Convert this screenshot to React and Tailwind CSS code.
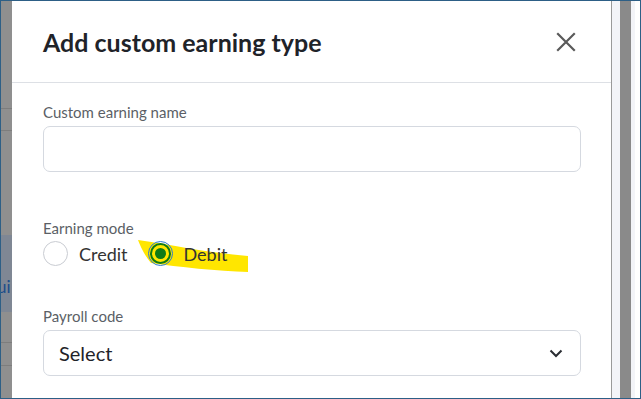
import React from 'react';

function Radio({ label, checked }) {
    return (
        <label className="flex items-center gap-[11px]">
            {checked ? (
                <span className="relative w-[25px] h-[25px] rounded-full border border-[#2b7bd0] flex items-center justify-center">
                    <span className="w-[21px] h-[21px] rounded-full border-[2px] border-[#0f7a16] flex items-center justify-center">
                        <span className="w-[11px] h-[11px] rounded-full bg-[#0f7a16]" />
                    </span>
                </span>
            ) : (
                <span className="w-[25px] h-[25px] rounded-full border border-[#c9ccd2] bg-white" />
            )}
            <span className="text-[18px] text-[#333] leading-none">{label}</span>
        </label>
    );
}

export default function App() {
    return (
        <div
            className="w-[641px] h-[399px] border border-[#2d5f86] flex overflow-hidden bg-white"
            style={{ fontFamily: 'Lato, "Open Sans", sans-serif' }}
        >
            {/* Left backdrop strip */}
            <div className="w-[11px] bg-[#8f8f8f] flex flex-col shrink-0">
                <div className="h-[107px]" />
                <div className="h-px bg-[#7d7d7d]" />
                <div className="h-[21px]" />
                <div className="h-px bg-[#7d7d7d]" />
                <div className="h-[104px]" />
                <div className="h-[77px] bg-[#7f8794] flex items-center overflow-hidden">
                    <span className="text-[17px] text-[#1d4d8a] -ml-[4px] mt-[26px]">ui</span>
                </div>
                <div className="h-[30px]" />
                <div className="h-px bg-[#7d7d7d]" />
                <div className="h-[22px]" />
                <div className="h-px bg-[#7d7d7d]" />
            </div>

            {/* Modal */}
            <div className="w-[599px] bg-white rounded-tl-[14px] flex flex-col shrink-0">
                <div className="h-[82px] flex items-center justify-between pl-[31px] pr-[35px] border-b border-[#dde0e5]">
                    <h1 className="text-[25px] font-bold text-[#1f2329] pt-[2px]">Add custom earning type</h1>
                    <svg width="20" height="20" viewBox="0 0 20 20" className="text-[#5a5a5a]">
                        <path d="M2 2 L18 18 M18 2 L2 18" stroke="currentColor" strokeWidth="2.2" strokeLinecap="square" />
                    </svg>
                </div>

                <div className="pl-[31px] pr-[30px] flex flex-col">
                    <div className="mt-[19px] text-[15px] leading-[20px] text-[#5b5f66]">Custom earning name</div>
                    <div className="mt-[4px] h-[46px] rounded-[7px] border border-[#d5d9e0] bg-white" />

                    <div className="mt-[46px] text-[15px] leading-[20px] text-[#5b5f66]">Earning mode</div>
                    <div className="mt-[3px] flex items-center gap-[20px] h-[25px]">
                        <Radio label="Credit" />
                        <div className="relative">
                            <svg
                                className="absolute -left-[10px] -top-[2px]"
                                width="112"
                                height="36"
                                viewBox="0 0 112 36"
                            >
                                <path
                                    d="M0 1 C30 5 70 14 110 17 L110 33 C80 32 40 28 13 24 C7 17 3 9 0 1 Z"
                                    fill="#ffe600"
                                />
                            </svg>
                            <div className="relative">
                                <Radio label="Debit" checked />
                            </div>
                        </div>
                    </div>

                    <div className="mt-[40px] text-[15px] leading-[20px] text-[#5b5f66]">Payroll code</div>
                    <div className="mt-[4px] h-[46px] rounded-[7px] border border-[#d5d9e0] bg-white flex items-center justify-between pl-[15px] pr-[17px]">
                        <span className="text-[20px] text-[#1f2329]">Select</span>
                        <svg width="14" height="9" viewBox="0 0 14 9">
                            <path d="M1.5 1.5 L7 7 L12.5 1.5" fill="none" stroke="#2a2d33" strokeWidth="2" />
                        </svg>
                    </div>
                </div>
            </div>

            {/* Right edge: scrollbar */}
            <div className="w-px bg-[#9a9a9a] shrink-0" />
            <div className="w-[8px] bg-[#f3f4f8] shrink-0" />
            <div className="w-[11px] bg-[#8a8a8a] shrink-0" />
            <div className="w-[4px] bg-[#f3f4f8] shrink-0" />
            <div className="flex-1 bg-white" />
        </div>
    );
}
